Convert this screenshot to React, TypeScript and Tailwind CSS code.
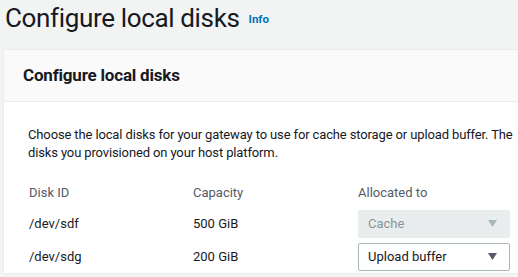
const Arrow = ({ color }: { color: string }) => (
  <svg width="9" height="7" viewBox="0 0 9 7">
    <polygon points="0,0 9,0 4.5,7" fill={color} />
  </svg>
)

const disks = [
  { id: '/dev/sdf', size: '500 GiB', alloc: 'Cache', locked: true },
  { id: '/dev/sdg', size: '200 GiB', alloc: 'Upload buffer', locked: false },
]

export default function App() {
  return (
    <div className="w-[518px] h-[277px] overflow-hidden bg-[#f2f3f3] text-[#16191f] font-['Roboto',sans-serif]">
      <div className="flex items-end gap-[9px] pl-[5px] h-[36px]">
        <h1 className="text-[26px] leading-[36px] tracking-[-0.35px]">Configure local disks</h1>
        <a className="text-[11.5px] font-bold text-[#0073bb] mb-[8px]">Info</a>
      </div>
      <div className="ml-[3px] mt-[13px] w-[640px] border border-[#eaeded] bg-white">
        <div className="h-[52px] flex items-center px-[19px] bg-[#fafafa] border-b border-[#eaeded]">
          <h2 className="text-[17px] font-bold tracking-[-0.2px]">Configure local disks</h2>
        </div>
        <div className="pl-[24px] pt-[24px]">
          <p className="text-[13px] leading-[18px] tracking-[-0.13px] whitespace-nowrap">
            Choose the local disks for your gateway to use for cache storage or upload buffer. The
            <br />
            disks you provisioned on your host platform.
          </p>
          <div className="mt-[17px] text-[13px]">
            <div className="flex h-[28px] items-center text-[#545b64]">
              <div className="w-[165px] pl-[1px]">Disk ID</div>
              <div className="w-[165px]">Capacity</div>
              <div>Allocated to</div>
            </div>
            {disks.map((d) => (
              <div key={d.id} className="flex h-[33px] items-center">
                <div className="w-[165px] pl-[1px]">{d.id}</div>
                <div className="w-[165px]">{d.size}</div>
                {d.locked ? (
                  <div className="w-[152px] h-[28px] rounded-[2px] bg-[#eaeded] text-[#879596] flex items-center justify-between pl-[10px] pr-[13px]">
                    <span>{d.alloc}</span>
                    <Arrow color="#aab7b8" />
                  </div>
                ) : (
                  <div className="w-[152px] h-[28px] rounded-[2px] border border-[#aab7b8] bg-white flex items-center justify-between pl-[9px] pr-[12px]">
                    <span>{d.alloc}</span>
                    <Arrow color="#545b64" />
                  </div>
                )}
              </div>
            ))}
          </div>
        </div>
      </div>
    </div>
  )
}
